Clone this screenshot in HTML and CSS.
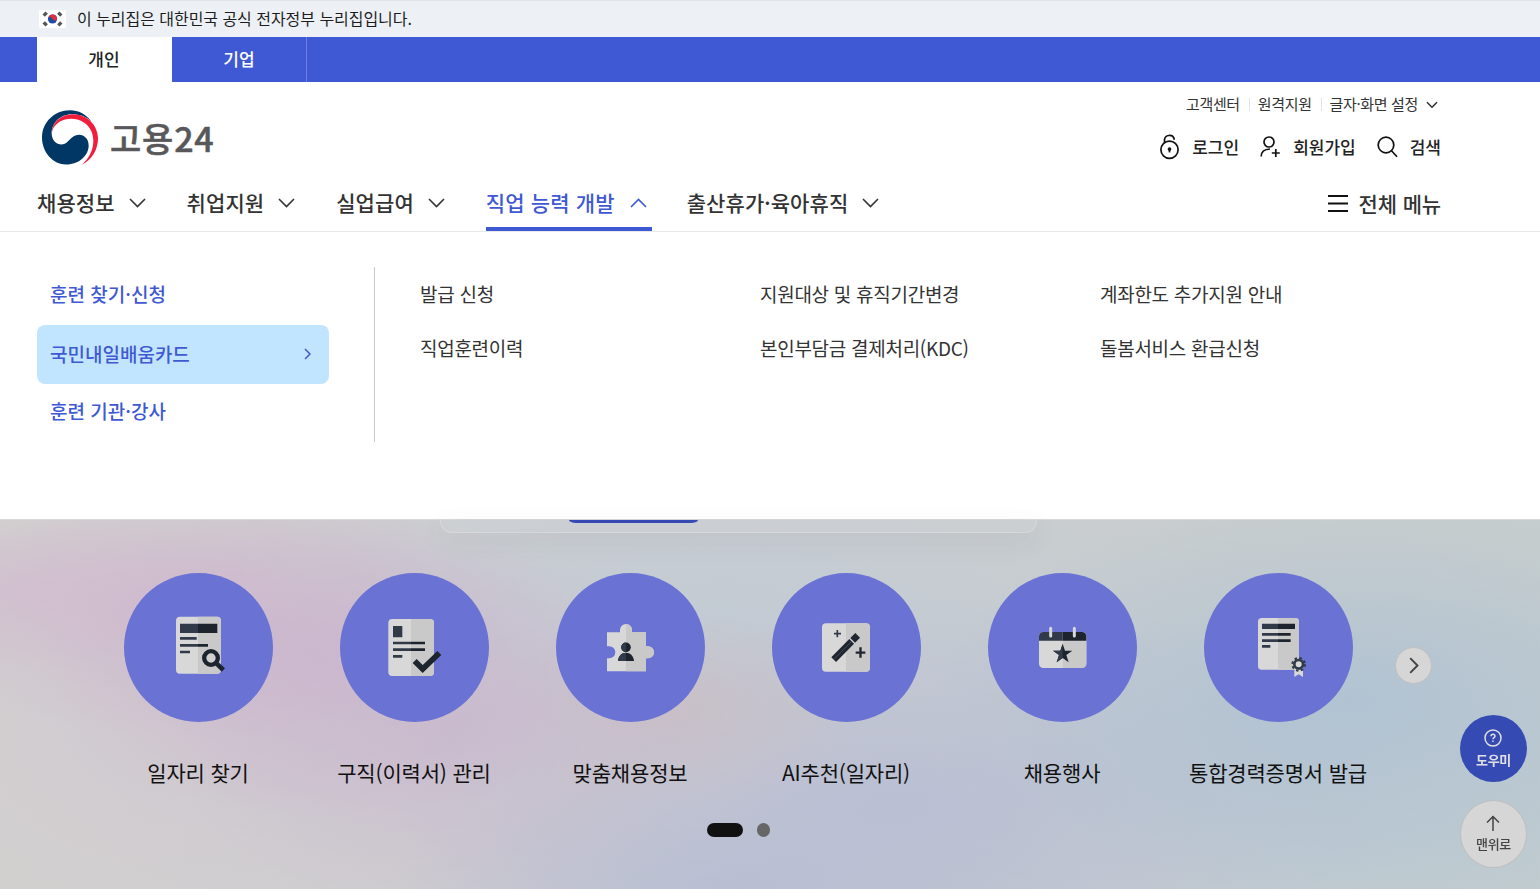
FILE: index.html
```
<!DOCTYPE html>
<html lang="ko">
<head>
    <meta charset="UTF-8">
    <meta name="viewport" content="width=device-width, initial-scale=1.0">
    <title>고용24</title>
    <link rel="stylesheet" href="styles.css">
</head>
<body>
    <div class="gov-bar">
        <svg class="flag" viewBox="0 0 27 18">
            <rect width="27" height="18" rx="1" fill="#fff"/>
            <circle cx="13.5" cy="9" r="4.6" fill="#1f4ba5"/>
            <path d="M9.3 7.2a4.6 4.6 0 0 1 8.8 2.2c-1.500 1.700-3.500 1-4.600-.4s-3-2.800-4.200-1.800z" fill="#d8323f"/>
            <g stroke="#555" stroke-width="3.400">
                <path d="M4.700 5.600l3-3M19.300 2.600l3 3M4.700 12.400l3 3M19.300 15.400l3-3"/>
            </g>
        </svg>
        <span>이 누리집은 대한민국 공식 전자정부 누리집입니다.</span>
    </div>

    <div class="tabs">
        <a class="tab active">개인</a>
        <a class="tab">기업</a>
    </div>

    <header class="header">
        <div class="header-top">
            <div class="logo">
                <svg viewBox="36 31 168 164" width="56" height="55">
                    <path fill="#003764" d="M185 66C168 42 145 31 120 31C73 31 36 67 36 113C36 158 70 194 108 194C150 194 176 165 176 137C176 118 163 105 147 105C122 105 116 134 95 134C78 134 66 122 65 102C64 70 90 43 125 43C150 43 170 50 185 66Z"/>
                    <path fill="#f01e3c" d="M65 100C66 68 92 43 128 43C172 43 204 76 204 116C204 150 184 182 156 194C176 176 190 152 190 122C190 85 162 58 125 57C92 57 70 75 65 100Z"/>
                </svg>
                <span>고용24</span>
            </div>
            <div class="header-links">
                <ul class="util">
                    <li>고객센터</li>
                    <li>원격지원</li>
                    <li>글자·화면 설정
                        <svg width="12" height="8" viewBox="0 0 12 8"><path d="M1 1.200l5 5 5-5"/></svg>
                    </li>
                </ul>
                <ul class="member">
                    <li>
                        <svg class="ico-lock" width="20" height="26" viewBox="0 0 20 26"><circle cx="9.500" cy="15.800" r="8.600"/><path d="M4.500 8.700V5.500a5 4.600 0 0 1 9.600-1.200v1.500"/><circle cx="9.500" cy="15" r="1" fill="#111"/><path d="M9.500 15v3.400"/></svg>
                        로그인
                    </li>
                    <li>
                        <svg class="ico-join" width="21" height="22" viewBox="0 0 21 22"><circle cx="9" cy="6" r="5"/><path d="M1.200 20.500c0-4.700 3-7.300 8.800-7.500M15.800 13v8M11.800 17h8"/></svg>
                        회원가입
                    </li>
                    <li>
                        <svg class="ico-search" width="21" height="22" viewBox="0 0 21 22"><circle cx="9" cy="9" r="7.800"/><path d="M14.500 14.700l5.500 6"/></svg>
                        검색
                    </li>
                </ul>
            </div>
        </div>
        <nav class="gnb">
            <a>채용정보<svg width="17" height="10" viewBox="0 0 17 10"><path d="M1 1l7.500 7.500L16 1"/></svg></a>
            <a>취업지원<svg width="17" height="10" viewBox="0 0 17 10"><path d="M1 1l7.500 7.500L16 1"/></svg></a>
            <a>실업급여<svg width="17" height="10" viewBox="0 0 17 10"><path d="M1 1l7.500 7.500L16 1"/></svg></a>
            <a class="on">직업 능력 개발<svg width="17" height="10" viewBox="0 0 17 10"><path d="M1 9l7.500-7.500L16 9"/></svg></a>
            <a>출산휴가·육아휴직<svg width="17" height="10" viewBox="0 0 17 10"><path d="M1 1l7.500 7.500L16 1"/></svg></a>
            <span class="all-menu"><svg width="20" height="17" viewBox="0 0 20 17"><path d="M0 1h20M0 8.500h20M0 16h20"/></svg>전체 메뉴</span>
        </nav>
    </header>

    <section class="mega">
        <ul class="mega-side">
            <li>훈련 찾기·신청</li>
            <li class="on">국민내일배움카드<svg width="7" height="12" viewBox="0 0 7 12"><path d="M1 1l5 5-5 5"/></svg></li>
            <li>훈련 기관·강사</li>
        </ul>
        <ul class="mega-list">
            <li>발급 신청</li>
            <li>지원대상 및 휴직기간변경</li>
            <li>계좌한도 추가지원 안내</li>
            <li>직업훈련이력</li>
            <li>본인부담금 결제처리(KDC)</li>
            <li>돌봄서비스 환급신청</li>
        </ul>
    </section>

    <main class="hero">
        <div class="search-card"><div class="search-btn"></div></div>
        <ul class="quick">
            <li>
                <svg class="circle" viewBox="12 24 447 447">
                    <rect x="168" y="155" width="135" height="171" rx="12" fill="#d8d8d8"/>
                    <path d="M234 155h57a12 12 0 0 1 12 12v147a12 12 0 0 1-12 12h-57z" fill="#c9c9c9"/>
                    <path d="M180 176h54v28h-54zM180 216h50v8h-50zM180 237h54v8h-54zM180 257h30v8h-30z" fill="#303a48"/>
                    <path d="M234 176h58v28h-58zM234 237h30v8h-30z" fill="#1e242e"/>
                    <circle cx="273" cy="279" r="20.500" fill="#d0d0d0" stroke="#1c242e" stroke-width="13"/>
                    <path d="M287 293l23 22" stroke="#1c242e" stroke-width="14"/>
                </svg>
                <span>일자리 찾기</span>
            </li>
            <li>
                <svg class="circle" viewBox="660 24 447 447">
                    <rect x="805" y="162" width="137" height="171" rx="12" fill="#d8d8d8"/>
                    <path d="M873 162h57a12 12 0 0 1 12 12v147a12 12 0 0 1-12 12h-57z" fill="#c9c9c9"/>
                    <path d="M819 183h28v34h-28zM819 230h54v8h-54zM819 250h54v8h-54zM819 270h28v8h-28z" fill="#303a48"/>
                    <path d="M873 230h42v8h-42zM873 250h42v8h-42z" fill="#1e242e"/>
                    <path d="M884 288l24 24 50-48" fill="none" stroke="#1c242e" stroke-width="17"/>
                </svg>
                <span>구직(이력서) 관리</span>
            </li>
            <li>
                <svg class="circle" viewBox="18 24 447 447">
                    <path d="M171 202h39v-7a18 18 0 0 1 36 0v7h42v42h6a18 18 0 0 1 0 36h-6v39H171v-39h7a18 18 0 0 0 0-36h-7z" fill="#d8d8d8"/>
                    <path d="M228 177a18 18 0 0 1 18 18v7h42v42h6a18 18 0 0 1 0 36h-6v39h-60z" fill="#c9c9c9"/>
                    <circle cx="228" cy="247" r="14.500" fill="#1e242e"/>
                    <path d="M204 288c1-15 11-25 24-25s23 10 24 25z" fill="#1e242e"/>
                    <path d="M228 232.500a14.500 14.500 0 0 0 0 29zM204 288c1-15 11-25 24-25v25z" fill="#303a48"/>
                </svg>
                <span>맞춤채용정보</span>
            </li>
            <li>
                <svg class="circle" viewBox="666 24 447 447">
                    <rect x="816" y="175" width="144" height="145" rx="12" fill="#d8d8d8"/>
                    <path d="M888 175h60a12 12 0 0 1 12 12v121a12 12 0 0 1-12 12h-60z" fill="#c9c9c9"/>
                    <path d="M851 284l54-55M908 226l15-15" stroke="#1f2630" stroke-width="20"/>
                    <path d="M897 219l18 18" stroke="#d0d0d0" stroke-width="3"/>
                    <path d="M852 283l53-54" stroke="#566070" stroke-width="2"/>
                    <path d="M852 206h21M862 195v22" stroke="#303a48" stroke-width="5"/>
                    <path d="M917 263h29M931.500 247v31" stroke="#1f2630" stroke-width="7"/>
                </svg>
                <span>AI추천(일자리)</span>
            </li>
            <li>
                <svg class="circle" viewBox="24 24 447 447">
                    <rect x="177" y="201" width="142" height="108" rx="13" fill="#d8d8d8"/>
                    <path d="M248 201h58a13 13 0 0 1 13 13v82a13 13 0 0 1-13 13h-58z" fill="#c9c9c9"/>
                    <path d="M177 227v-13a13 13 0 0 1 13-13h58v26z" fill="#303a48"/>
                    <path d="M248 201h58a13 13 0 0 1 13 13v13h-71z" fill="#1e242e"/>
                    <path d="M212 190v23M283 190v23" stroke="#d8d8d8" stroke-width="9" stroke-linecap="round"/>
                    <path d="M248 236l7 21h22l-18 13 7 22-18-13-18 13 7-22-18-13h22z" fill="#1e242e"/>
                    <path d="M248 236v43l-18 13 7-22-18-13h22z" fill="#303a48"/>
                </svg>
                <span>채용행사</span>
            </li>
            <li>
                <svg class="circle" viewBox="672 24 447 447">
                    <rect x="834" y="159" width="123" height="155" rx="11" fill="#d8d8d8"/>
                    <path d="M894 159h52a11 11 0 0 1 11 11v133a11 11 0 0 1-11 11h-52z" fill="#c9c9c9"/>
                    <path d="M846 176h48v16h-48zM846 204h48v8h-48zM846 223h48v8h-48zM846 240h25v8h-25z" fill="#303a48"/>
                    <path d="M894 176h51v16h-51zM894 204h38v8h-38zM894 223h38v8h-38z" fill="#1e242e"/>
                    <path d="M943 308h26v28l-13-8-13 8z" fill="#d8d8d8"/>
                    <circle cx="956" cy="298" r="19" fill="none" stroke="#303a48" stroke-width="6" stroke-dasharray="7.500 7.420"/>
                    <circle cx="956" cy="298" r="13" fill="#d8d8d8" stroke="#303a48" stroke-width="8"/>
                </svg>
                <span>통합경력증명서 발급</span>
            </li>
        </ul>
        <div class="paging"><i class="current"></i><i></i></div>
        <button class="next"><svg width="10" height="17" viewBox="0 0 10 17"><path d="M1.200 1.200l7.300 7.300-7.300 7.300"/></svg></button>
    </main>

    <div class="floating">
        <button class="helper">
            <svg width="18" height="18" viewBox="0 0 18 18"><circle cx="9" cy="9" r="8"/><path d="M7 7.200c.1-2.600 4.200-2.400 4 .1-.1 1.300-2 1.400-2 3M9 11.600v1.500"/></svg>
            도우미
        </button>
        <button class="to-top">
            <svg width="14" height="16" viewBox="0 0 14 16"><path d="M7 16V1.500M1 7.500l6-6 6 6"/></svg>
            맨위로
        </button>
    </div>
</body>
</html>
```
FILE: styles.css
```
* {
    margin: 0;
    padding: 0;
    box-sizing: border-box;
}
body {
    font-family: "Noto Sans CJK KR", sans-serif;
    color: #333;
    background: #fff;
    height: 100vh;
    overflow: hidden;
    display: flex;
    flex-direction: column;
}
ul {
    list-style: none;
}
svg {
    display: block;
    flex: none;
}
button {
    font-family: inherit;
    cursor: pointer;
}
.gov-bar {
    height: 37px;
    flex: none;
    display: flex;
    align-items: center;
    gap: 11px;
    padding-left: 39px;
    background: #edf1f5;
    border-top: 1px solid #e2e4e6;
    font-size: 16px;
    letter-spacing: -0.04px;
    color: #1d1d1d;
}
.gov-bar span {
    padding-bottom: 2px;
}
.flag {
    width: 27px;
    height: 18px;
}
.tabs {
    height: 45px;
    flex: none;
    display: flex;
    padding-left: 37px;
    background: #3f59d4;
}
.tab {
    width: 135px;
    line-height: 44px;
    text-align: center;
    font-size: 17px;
    font-weight: 500;
    color: #fff;
    border-right: 1px solid #6b80de;
}
.tab.active {
    background: #fff;
    color: #222;
    border-right-color: #fff;
}
.header {
    height: 150px;
    flex: none;
    display: flex;
    flex-direction: column;
    padding: 0 99px 0 37px;
    border-bottom: 1px solid #e8e8e8;
}
.header-top {
    height: 93px;
    flex: none;
    display: flex;
    justify-content: space-between;
}
.logo {
    display: flex;
    align-items: center;
    gap: 12px;
    padding: 18px 0 0 5px;
    font-size: 34px;
    font-weight: 500;
    letter-spacing: 0.8px;
    color: #58585a;
    -webkit-text-stroke: 0.5px #58585a;
}
.header-links {
    display: flex;
    flex-direction: column;
    align-items: flex-end;
    padding-top: 11px;
}
.util {
    display: flex;
    font-size: 15px;
    line-height: 22px;
    letter-spacing: -0.35px;
    padding-right: 3px;
}
.util li {
    display: flex;
    align-items: center;
    gap: 8px;
}
.util li + li::before {
    content: "";
    width: 1px;
    height: 13px;
    margin-left: 9px;
    background: #e3e3e3;
}
.util svg {
    fill: none;
    stroke: #333;
    stroke-width: 1.6;
    margin-top: 2px;
}
.member {
    display: flex;
    gap: 21px;
    padding-top: 19px;
    font-size: 17px;
    line-height: 26px;
    font-weight: 500;
    color: #222;
}
.member li {
    display: flex;
    align-items: center;
    gap: 12px;
}
.member svg {
    fill: none;
    stroke: #111;
    stroke-width: 1.7;
}
.gnb {
    height: 56px;
    flex: none;
    display: flex;
    gap: 35px;
    font-size: 21px;
    font-weight: 500;
}
.gnb a {
    display: flex;
    align-items: center;
    gap: 14px;
    height: 56px;
    padding: 0 6px 3px 0;
    letter-spacing: 0.08px;
}
.gnb a svg, .all-menu svg {
    fill: none;
    stroke: #333;
    stroke-width: 1.6;
    margin-top: 3px;
}
.gnb a.on {
    color: #3f59d4;
    border-bottom: 4px solid #3f59d4;
    padding: 1px 5px 0 0;
    letter-spacing: 0.15px;
}
.gnb a.on svg {
    stroke: #3f59d4;
    margin-left: 1px;
}
.all-menu {
    display: flex;
    align-items: center;
    gap: 11px;
    height: 55px;
    margin-left: auto;
    letter-spacing: -0.15px;
}
.all-menu svg {
    stroke: #111;
    stroke-width: 2;
    margin-top: 2px;
}
.mega {
    height: 288px;
    flex: none;
    display: flex;
    align-items: flex-start;
    padding: 35px 0 0 37px;
    border-bottom: 1px solid #d8d8d8;
    font-size: 19px;
}
.mega-side {
    width: 338px;
    height: 175px;
    padding-right: 45px;
    border-right: 1px solid #c8c8c8;
    color: #3f59d4;
    font-weight: 500;
}
.mega-side li {
    height: 58px;
    display: flex;
    align-items: center;
    justify-content: space-between;
    padding: 0 18px 5px 13px;
}
.mega-side li.on {
    height: 59px;
    padding-bottom: 2px;
    border-radius: 8px;
    background: #c2e5ff;
}
.mega-side svg {
    fill: none;
    stroke: #3f59d4;
    stroke-width: 1.5;
}
.mega-list {
    display: grid;
    grid-template-columns: repeat(3, 340px);
    grid-auto-rows: 54px;
    align-items: center;
    padding-left: 45px;
    letter-spacing: -0.28px;
}
.mega-list li {
    padding-bottom: 2px;
}
.hero {
    position: relative;
    flex: 1;
    display: flex;
    flex-direction: column;
    align-items: center;
    background:
        radial-gradient(ellipse 260px 80px at 40px 70px, rgba(210, 182, 207, 0.5), transparent),
        radial-gradient(ellipse 300px 130px at 200px 90px, rgba(205, 178, 205, 0.6), transparent),
        radial-gradient(ellipse 280px 160px at 320px 140px, rgba(202, 176, 204, 0.55), transparent),
        radial-gradient(ellipse 280px 190px at 450px 210px, rgba(199, 180, 205, 0.6), transparent),
        radial-gradient(ellipse 420px 230px at 240px 200px, rgba(208, 196, 210, 0.6), transparent),
        radial-gradient(ellipse 200px 100px at 670px 190px, rgba(204, 188, 193, 0.65), transparent),
        radial-gradient(ellipse 420px 200px at 1350px 180px, rgba(174, 193, 211, 0.85), transparent),
        radial-gradient(ellipse 520px 210px at 900px 280px, rgba(183, 188, 212, 0.85), transparent),
        radial-gradient(ellipse 360px 120px at 740px 370px, rgba(181, 187, 210, 0.8), transparent),
        radial-gradient(ellipse 520px 160px at 700px 90px, rgba(193, 203, 213, 0.8), transparent),
        radial-gradient(ellipse 500px 240px at 1400px 310px, rgba(188, 202, 209, 0.9), transparent),
        linear-gradient(90deg, #d2d1cf, #cbcdd0 50%, #c6cdcd);
}
.search-card {
    width: 597px;
    height: 13px;
    margin-right: 63px;
    display: flex;
    padding-left: 128px;
    border: 1px solid #d6d9da;
    border-top: none;
    border-radius: 0 0 12px 12px;
    background: rgba(205, 209, 211, 0.6);
    box-shadow: 0 8px 24px rgba(80, 90, 100, 0.1);
}
.search-btn {
    width: 129px;
    height: 3px;
    border-radius: 0 0 7px 7px / 0 0 3px 3px;
    background: #354ab2;
}
.quick {
    display: flex;
    align-self: flex-start;
    padding: 40px 0 0 90px;
}
.quick li {
    width: 216px;
    display: flex;
    flex-direction: column;
    align-items: center;
    font-size: 21px;
    line-height: 30px;
    letter-spacing: -0.18px;
    color: #111;
    white-space: nowrap;
}
.circle {
    width: 149px;
    height: 149px;
    border-radius: 50%;
    background: #6a72d4;
    margin-bottom: 35px;
}
.paging {
    display: flex;
    gap: 14px;
    margin: 36px 63px 0 0;
}
.paging i {
    width: 13px;
    height: 14px;
    border-radius: 7px;
    background: #666;
}
.paging .current {
    width: 36px;
    background: #111;
}
.next {
    position: absolute;
    right: 108px;
    top: 127px;
    width: 37px;
    height: 37px;
    display: flex;
    align-items: center;
    justify-content: center;
    border: 1px solid #bfbfbf;
    border-radius: 50%;
    background: #d6d6d6;
}
.next svg {
    fill: none;
    stroke: #444;
    stroke-width: 1.9;
}
.floating {
    position: fixed;
    right: 13px;
    bottom: 21px;
    display: flex;
    flex-direction: column;
    gap: 18px;
}
.floating button {
    width: 67px;
    height: 67px;
    display: flex;
    flex-direction: column;
    align-items: center;
    justify-content: center;
    gap: 3px;
    border: none;
    border-radius: 50%;
    font-size: 13px;
    line-height: 19px;
    font-weight: 500;
    letter-spacing: -0.3px;
}
.floating svg {
    fill: none;
    stroke: currentColor;
    stroke-width: 1.5;
    margin-right: 1px;
}
.floating .helper {
    background: #354ab2;
    color: #e0e0e4;
    font-weight: 700;
}
.floating .to-top {
    height: 68px;
    background: #d6d6d6;
    border: 1px solid #bfbfbf;
    color: #444;
}
```
